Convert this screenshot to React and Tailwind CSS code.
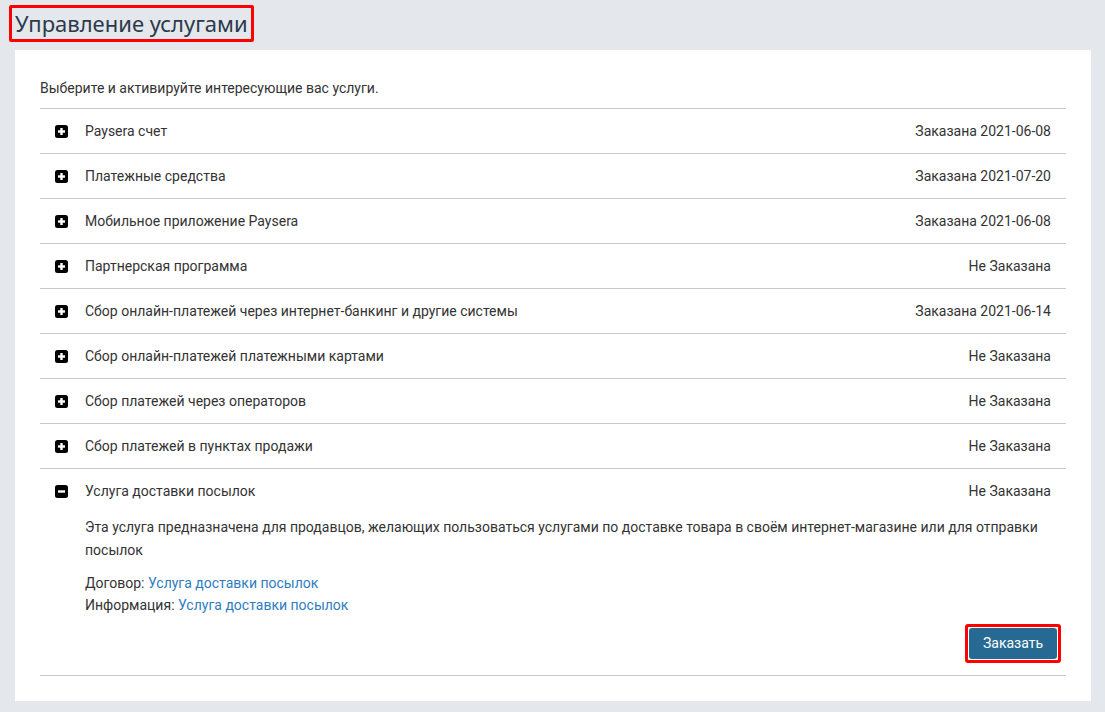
const services = [
  { name: "Paysera счет", status: "Заказана 2021-06-08" },
  { name: "Платежные средства", status: "Заказана 2021-07-20" },
  { name: "Мобильное приложение Paysera", status: "Заказана 2021-06-08" },
  { name: "Партнерская программа", status: "Не Заказана" },
  {
    name: "Сбор онлайн-платежей через интернет-банкинг и другие системы",
    status: "Заказана 2021-06-14",
  },
  { name: "Сбор онлайн-платежей платежными картами", status: "Не Заказана" },
  { name: "Сбор платежей через операторов", status: "Не Заказана" },
  { name: "Сбор платежей в пунктах продажи", status: "Не Заказана" },
  { name: "Услуга доставки посылок", status: "Не Заказана", open: true },
];

const ToggleIcon = ({ open }) => (
  <svg width="13" height="13" viewBox="0 0 13 13" className="shrink-0">
    <rect x="0" y="0" width="13" height="13" rx="2.5" fill="#000" />
    {open ? (
      <rect x="3" y="5.3" width="7" height="2.4" fill="#fff" />
    ) : (
      <>
        <rect x="3" y="5.3" width="7" height="2.4" fill="#fff" />
        <rect x="5.3" y="3" width="2.4" height="7" fill="#fff" />
      </>
    )}
  </svg>
);

const ServiceRow = ({ service }) => (
  <div className="border-t border-[#c8c8c8]">
    <div className="flex items-center h-[44px] pl-[15px] pr-[15px] cursor-pointer">
      <ToggleIcon open={service.open} />
      <span className="ml-[17px] flex-1">{service.name}</span>
      <span>{service.status}</span>
    </div>
    {service.open && (
      <div className="pl-[45px] pr-[15px] pb-[12px]">
        <p className="leading-[23px] mt-[3px]">
          Эта услуга предназначена для продавцов, желающих пользоваться услугами
          по доставке товара в своём интернет-магазине или для отправки посылок
        </p>
        <div className="mt-[10px] leading-[22px]">
          <div>
            Договор:{" "}
            <a href="#" className="text-[#2f7dc0]">
              Услуга доставки посылок
            </a>
          </div>
          <div>
            Информация:{" "}
            <a href="#" className="text-[#2f7dc0]">
              Услуга доставки посылок
            </a>
          </div>
        </div>
        <div className="flex justify-end mt-[8px] mr-[-10px]">
          <div className="border-[3px] border-[#ff0000] rounded-[3px] p-[1px]">
            <button className="bg-[#266a93] text-white rounded-[3px] h-[31px] w-[88px] text-[14px]">
              Заказать
            </button>
          </div>
        </div>
      </div>
    )}
  </div>
);

const App = () => {
  return (
    <div className="min-h-[712px] bg-[#e4e7eb] pt-[5px] pb-[12px] text-[14px] text-[#333] font-['Roboto',sans-serif]">
      <div className="ml-[9px] inline-block border-[3px] border-[#ff0000] rounded-[2px] px-[3px] h-[37px]">
        <h1 className="text-[22px] leading-[30px] text-[#2c3a4b] font-['Noto_Sans',sans-serif]">
          Управление услугами
        </h1>
      </div>
      <div className="mt-[8px] ml-[15px] mr-[14px] bg-white pt-[28px] px-[25px] pb-[25px]">
        <p className="leading-[20px] mb-[10px]">
          Выберите и активируйте интересующие вас услуги.
        </p>
        <div className="border-b border-[#c8c8c8]">
          {services.map((s) => (
            <ServiceRow key={s.name} service={s} />
          ))}
        </div>
      </div>
    </div>
  );
};

export default App;
